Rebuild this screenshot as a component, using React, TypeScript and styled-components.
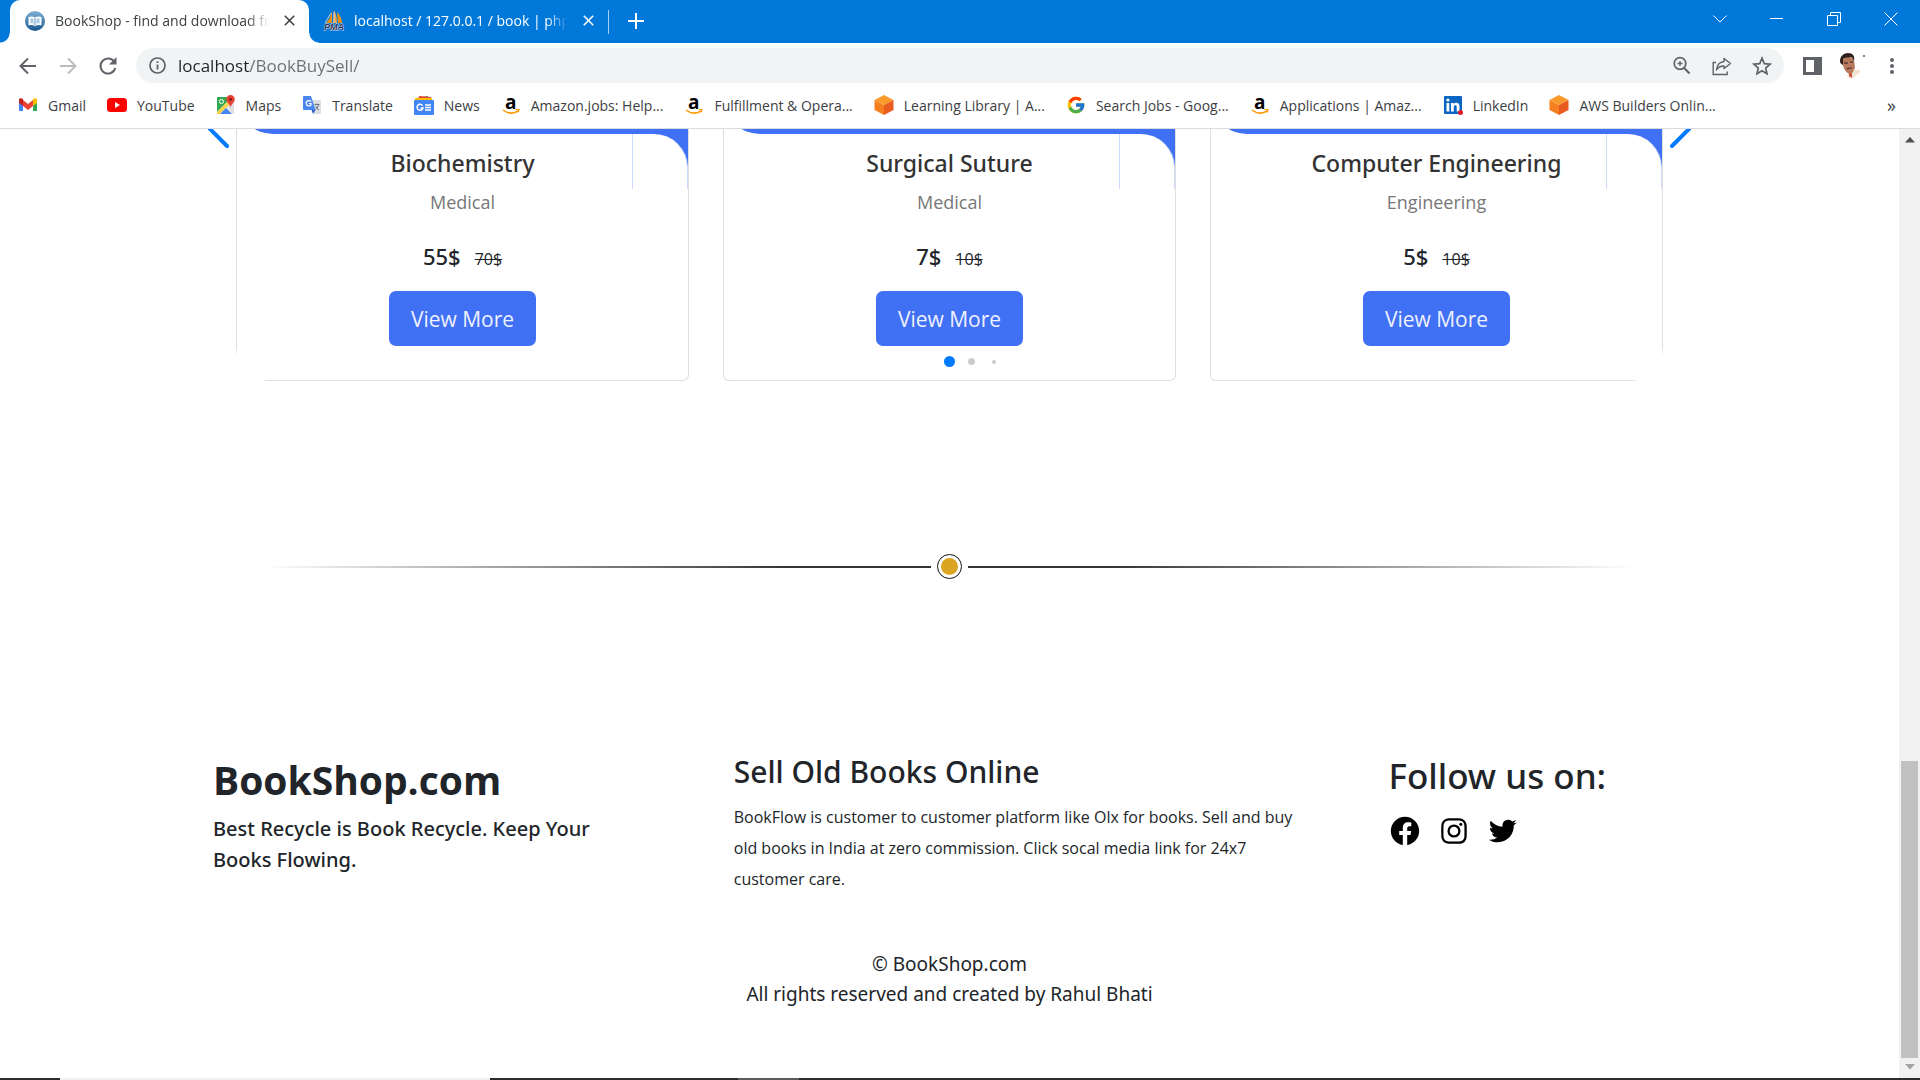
import React from "react";
import styled, { createGlobalStyle } from "styled-components";
import { BiLogoFacebookCircle, BiLogoInstagram, BiLogoTwitter } from "react-icons/bi";
import { FcGoogle } from "react-icons/fc";

const sans = `"Open Sans", "Noto Sans", sans-serif`;
const heading = `"Noto Sans", "Open Sans", sans-serif`;

const GlobalStyle = createGlobalStyle`
  *, *::before, *::after { box-sizing: border-box; }
  body { margin: 0; background: #fff; color: #212529; font-family: ${sans}; }
  h1, h2, h3, p { margin: 0; }
  a { color: inherit; text-decoration: none; }
  button { border: 0; padding: 0; background: none; font: inherit; color: inherit; cursor: pointer; }
  svg { display: block; flex: none; overflow: visible; }
`;

const Screen = styled.div`
  display: flex;
  flex-direction: column;
  height: 100vh;
  overflow: hidden;
`;

/* ---------- browser frame ---------- */

const TitleBar = styled.header`
  display: flex;
  flex: none;
  height: 43px;
  padding: 0 1px 0 10px;
  background: #0078d9;
`;

const Tab = styled.div<{ $active?: boolean }>`
  position: relative;
  display: flex;
  align-items: center;
  width: 299px;
  padding: 0 10px 2px 15px;
  gap: 10px;
  font-size: 14px;
  color: ${(p) => (p.$active ? "#3c4043" : "#fff")};
  background: ${(p) => (p.$active ? "#fff" : "transparent")};
  border-radius: 10px 10px 0 0;

  &::before,
  &::after {
    content: "";
    display: ${(p) => (p.$active ? "block" : "none")};
    position: absolute;
    bottom: 0;
    width: 10px;
    height: 10px;
  }
  &::before {
    left: -10px;
    background: radial-gradient(circle at 0 0, transparent 9px, #fff 10px);
  }
  &::after {
    right: -10px;
    background: radial-gradient(circle at 100% 0, transparent 9px, #fff 10px);
  }
`;

const TabTitle = styled.span`
  flex: 1;
  overflow: hidden;
  white-space: nowrap;
  mask-image: linear-gradient(90deg, #000 90%, transparent 100%);
`;

const TabClose = styled.button`
  display: grid;
  place-items: center;
  width: 20px;
  height: 20px;
`;

const NewTab = styled.button`
  display: grid;
  place-items: center;
  width: 54px;
  padding-bottom: 2px;
`;

const TabDivider = styled.span`
  align-self: center;
  width: 1px;
  height: 24px;
  background: #a9d0f2;
`;

const WindowControls = styled.div`
  display: flex;
  height: 37px;
  margin-left: auto;
`;

const WindowButton = styled.button`
  display: grid;
  place-items: center;
  width: 57px;
`;

const Toolbar = styled.div`
  display: flex;
  flex: none;
  align-items: center;
  height: 45px;
  padding: 0 8px;
`;

const ToolButton = styled.button`
  display: grid;
  place-items: center;
  width: 40px;
  height: 35px;
`;

const Omnibox = styled.label`
  display: flex;
  flex: 1;
  align-items: center;
  height: 35px;
  margin: 0 8px;
  padding: 0 2px 0 13px;
  border-radius: 18px;
  background: #f1f3f4;
`;

const Address = styled.input`
  flex: 1;
  min-width: 0;
  margin-left: 12px;
  padding: 0;
  border: 0;
  outline: 0;
  font: 17px/24px ${sans};
  color: #202124;
  background: linear-gradient(90deg, #202124 72px, #6a6e73 72px);
  background-clip: text;
  -webkit-text-fill-color: transparent;
`;

const BookmarkBar = styled.nav`
  display: flex;
  flex: none;
  align-items: center;
  gap: 21px;
  height: 41px;
  padding: 0 24px 6px 18px;
  border-bottom: 1px solid #dadcde;
  font-size: 14px;
  color: #3c4043;
`;

const Bookmark = styled.a`
  display: flex;
  align-items: center;
  gap: 10px;
  white-space: nowrap;
`;

const MoreBookmarks = styled.button`
  margin-left: auto;
  font-size: 18px;
  line-height: 20px;
`;

const Viewport = styled.div`
  display: flex;
  flex: 1;
  min-height: 0;
`;

const Page = styled.main`
  flex: 1;
  min-width: 0;
  overflow: hidden;
`;

const ScrollTrack = styled.div`
  display: flex;
  flex-direction: column;
  align-items: center;
  width: 21px;
  padding: 8px 0;
  background: #f1f1f1;
`;

const ScrollThumb = styled.div`
  width: 17px;
  height: 297px;
  margin: auto 0 6px;
  background: #c1c1c1;
`;

const Taskbar = styled.div`
  display: flex;
  flex: none;
  height: 2px;
  padding-left: 60px;
  background: #2d2b2c;
`;

const TaskItem = styled.span<{ $tone: string; $width: number }>`
  width: ${(p) => p.$width}px;
  background: ${(p) => p.$tone};
`;

/* ---------- slider ---------- */

const Slider = styled.section`
  display: flex;
  justify-content: center;
`;

const Slides = styled.div`
  position: relative;
  display: flex;
  flex: 0 1 1427px;
  gap: 34px;
  overflow: hidden;
  border-radius: 0 0 34px 34px;
`;

const ArrowButton = styled.button`
  width: 28px;
  height: 20px;
  overflow: hidden;
`;

const Card = styled.article`
  display: flex;
  flex: 1;
  flex-direction: column;
  align-items: center;
  padding-bottom: 34px;
  border: 1px solid #dfdfdf;
  border-top: 0;
  border-radius: 0 0 6px 6px;
`;

const Cover = styled.div`
  position: relative;
  align-self: stretch;
  height: 60px;
  margin-top: -55px;
  background: #4070f4;
  border-radius: 0 0 0 36px;

  &::before,
  &::after {
    content: "";
    position: absolute;
    top: 100%;
    right: 0;
    width: 56px;
  }
  &::before {
    height: 34px;
    background: #4070f4;
  }
  &::after {
    height: 55px;
    background: #fff;
    border: 1px solid #cfdafc;
    border-width: 0 1px;
    border-radius: 0 34px 0 0;
  }
`;

const BookTitle = styled.h3`
  margin-top: 14px;
  font: 500 23px/30px ${heading};
  color: #333;
`;

const Category = styled.p`
  margin-top: 10px;
  font-size: 18px;
  line-height: 28px;
  color: #777;
`;

const Price = styled.p`
  display: flex;
  align-items: baseline;
  gap: 14px;
  margin-top: 24px;
  font: 500 22px/32px ${heading};
`;

const OldPrice = styled.s`
  font: 400 16px/20px ${sans};
`;

const ViewButton = styled.button`
  height: 55px;
  margin-top: 19px;
  padding: 0 22px;
  border-radius: 7px;
  background: #4070f4;
  color: #eef2fe;
  font-size: 21px;
`;

const Bullets = styled.div`
  position: absolute;
  left: 0;
  right: 0;
  bottom: 14px;
  display: flex;
  justify-content: center;
  align-items: center;
  gap: 11px;
  padding-left: 44px;
`;

const BulletSlot = styled.button`
  display: grid;
  place-items: center;
  width: 11px;
  height: 11px;
`;

const Bullet = styled.span<{ $size: number; $on?: boolean }>`
  width: ${(p) => p.$size}px;
  height: ${(p) => p.$size}px;
  border-radius: 50%;
  background: ${(p) => (p.$on ? "#007aff" : "#ccc")};
`;

/* ---------- divider ---------- */

const Divider = styled.div`
  display: flex;
  align-items: center;
  justify-content: center;
  gap: 6px;
  max-width: 1427px;
  margin: 173px auto 0;
`;

const Rule = styled.span<{ $to: string }>`
  flex: 1;
  height: 2px;
  background: linear-gradient(to ${(p) => p.$to}, transparent 4%, #333 80%);
`;

const Knob = styled.span`
  width: 25px;
  height: 25px;
  padding: 3px;
  border: 1px solid #111;
  border-radius: 50%;
  background: #daa520 content-box;
`;

/* ---------- footer ---------- */

const Footer = styled.footer`
  max-width: 1473px;
  margin: 176px auto 0;
`;

const FooterColumns = styled.div`
  display: grid;
  grid-template-columns: 35fr 44fr 20fr;
`;

const Brand = styled.h1`
  font: 700 39px/50px ${sans};
`;

const Tagline = styled.p`
  max-width: 400px;
  margin-top: 8px;
  font: 500 20px/31px ${heading};
`;

const AboutTitle = styled.h2`
  font: 500 30px/34px ${heading};
`;

const About = styled.p`
  max-width: 580px;
  margin-top: 13px;
  font-size: 16px;
  line-height: 31px;
`;

const FollowTitle = styled.h2`
  font: 500 35px/42px ${heading};
`;

const Socials = styled.div`
  display: flex;
  gap: 15px;
  margin-top: 17px;
  font-size: 34px;
  color: #000;
`;

const Copyright = styled.p`
  margin-top: 54px;
  font: 400 19px/30px ${heading};
  text-align: center;
`;

/* ---------- icons ---------- */

const Cross = ({ size, width = 1 }: { size: number; width?: number }) => (
  <svg width={size} height={size} viewBox="0 0 14 14" stroke="currentColor" strokeWidth={width} fill="none">
    <path d="M1 1l12 12M13 1L1 13" />
  </svg>
);

const BookFavicon = () => (
  <svg width="20" height="20" viewBox="0 0 20 20">
    <defs>
      <linearGradient id="fav" x1="0" y1="0" x2="0" y2="1">
        <stop offset="0" stopColor="#7fb0d6" />
        <stop offset="1" stopColor="#17558f" />
      </linearGradient>
    </defs>
    <circle cx="10" cy="10" r="10" fill="url(#fav)" />
    <path d="M3.500 6c2.500-1 4.700-.8 6.500.6C11.800 5.200 14 5 16.500 6v8.500c-2.500-.8-4.700-.6-6.500.7-1.800-1.300-4-1.500-6.500-.7z" fill="#fff" />
    <path d="M10 7v7.500" stroke="#5b92c2" fill="none" />
    <path d="M5.500 7.500c1.200-.3 2.200-.1 3 .4v4.800c-.8-.4-1.800-.5-3-.2zM14.500 7.500c-1.200-.3-2.200-.1-3 .4v4.800c.8-.4 1.800-.5 3-.2z" fill="#a9c9e2" />
  </svg>
);

const PmaFavicon = () => (
  <svg width="20" height="21" viewBox="0 0 20 21">
    <path d="M8 1v12H2C5 10 7 6 8 1z" fill="#f29111" />
    <path d="M10 0c2 4 3 8 3 13H9z" fill="#f9a63a" />
    <path d="M13 2c3 3 5 7 5 11h-4z" fill="#f29111" />
    <path d="M7 3L1 13M10 2v11" stroke="#c8cbe0" strokeWidth="1" />
    <text x="0" y="20" fontSize="9" fontWeight="700" fontStyle="italic" fill="#2f3558" stroke="#d9dcef" strokeWidth="1" paintOrder="stroke" fontFamily="Liberation Sans">PMA</text>
  </svg>
);

const GmailIcon = () => (
  <svg width="20" height="20" viewBox="0 0 20 20">
    <path d="M1 5v11h4V9z" fill="#4285f4" />
    <path d="M19 5v11h-4V9z" fill="#34a853" />
    <path d="M5 5v6l5 4 5-4V5l-5 4z" fill="#ea4335" />
    <path d="M1 5c0-2 2-2.500 4-1v7L1 8z" fill="#c5221f" />
    <path d="M19 5c0-2-2-2.500-4-1v7l4-3z" fill="#fbbc04" />
  </svg>
);

const YoutubeIcon = () => (
  <svg width="20" height="20" viewBox="0 0 20 20">
    <rect y="3" width="20" height="14" rx="3.500" fill="#f00" />
    <path d="M8 7l5 3-5 3z" fill="#fff" />
  </svg>
);

const MapsIcon = () => (
  <svg width="20" height="20" viewBox="0 0 20 20">
    <rect x="1" y="2" width="17" height="17" rx="1" fill="#eee" />
    <path d="M1 2h15L1 17z" fill="#34a853" />
    <path d="M1 17L16 2l2 3L4 19H1z" fill="#fbd44b" />
    <path d="M10 13l6 6H4z" fill="#4285f4" />
    <path d="M11 12l7-6v13h-1z" fill="#dfe1e5" />
    <path d="M14.500 0a4.300 4.300 0 0 1 4.300 4.300c0 3-3.300 4.200-4.300 8.200-1-4-4.300-5.200-4.300-8.200A4.300 4.300 0 0 1 14.500 0z" fill="#ea4335" />
    <circle cx="14.500" cy="4.300" r="1.500" fill="#801b13" />
    <circle cx="5.500" cy="6.500" r="2" fill="none" stroke="#fff" />
  </svg>
);

const TranslateIcon = () => (
  <svg width="20" height="20" viewBox="0 0 20 20">
    <path d="M8 5h10a1 1 0 0 1 1 1v12a1 1 0 0 1-1 1h-6z" fill="#dcdee1" />
    <path d="M2 1h7l4.500 14H2a1 1 0 0 1-1-1V2a1 1 0 0 1 1-1z" fill="#4a86ee" />
    <path d="M9.500 15h4L11 19z" fill="#2f5fc4" />
    <path d="M9 6.500A2.700 2.700 0 1 0 9 10V8.500H6.800" fill="none" stroke="#fff" strokeWidth="1.200" />
    <path d="M12.500 9.500h5M15 8.500v1M16.500 9.500c-.5 2.500-1.500 4-3 5M13.500 11c.8 1.800 2 3 3.500 4" stroke="#6d7780" fill="none" />
  </svg>
);

const NewsIcon = () => (
  <svg width="20" height="20" viewBox="0 0 20 20">
    <path d="M2 3l12-2 1 5H3z" fill="#34a853" />
    <path d="M5 1l12 1v4H5z" fill="#ea4335" />
    <path d="M1 3h17v6H1z" fill="#fbbc04" />
    <rect y="5" width="20" height="15" rx="1" fill="#4285f4" />
    <path d="M8.500 10.500A3 3 0 1 0 9 13H6.500M11 10h6M11 12.500h6M11 15h6" fill="none" stroke="#fff" strokeWidth="1.500" />
  </svg>
);

const AmazonIcon = () => (
  <svg width="20" height="20" viewBox="0 0 20 20">
    <text x="4" y="14" fontSize="19" fontWeight="700" fontFamily="Open Sans" fill="#000">a</text>
    <path d="M2 15c5 4 11 4 15 .8" fill="none" stroke="#f90" strokeWidth="1.600" />
    <path d="M14.500 14.500h3.500l-1 3" fill="none" stroke="#f90" strokeWidth="1.200" />
  </svg>
);

const CubeIcon = () => (
  <svg width="20" height="20" viewBox="0 0 20 20">
    <path d="M10 0l9.500 5L10 10 .5 5z" fill="#fb9a2c" />
    <path d="M.5 5L10 10v10L.5 15z" fill="#f58020" />
    <path d="M19.500 5L10 10v10l9.500-5z" fill="#ea5b20" />
  </svg>
);

const LinkedInIcon = () => (
  <svg width="20" height="20" viewBox="0 0 20 20">
    <rect x="1" y="1" width="18" height="18" rx="1" fill="#0a66c2" />
    <path d="M3.500 8h2.800v8.500H3.500zM8 8h2.700v1.200c1.300-2.200 5.800-2 5.800 2v5.300h-2.800v-4.700c0-2.200-2.900-2-2.900 0v4.700H8z" fill="#fff" />
    <circle cx="4.900" cy="5" r="1.600" fill="#fff" />
    <circle cx="17.500" cy="17.500" r="2.500" fill="#e01a2b" />
  </svg>
);

const AvatarPhoto = () => (
  <svg width="28" height="28" viewBox="0 0 28 28">
    <path d="M9 24c3-5 9-7 12-6 2 1 1 3-1 4-2 0-2 3-5 4-3 1-5 0-6-2z" fill="#f4e3d0" />
    <path d="M4 8c3-4 10-4 12 0l1 7c-1 4-3 7-5 7-4-1-7-5-8-14z" fill="#b9795c" />
    <path d="M2 9c0-5 4-8 8-8 5 0 7 3 6 8-1-2-1-3-3-4-3 1-6 0-8 2l0 6c-2-1-3-2-3-4z" fill="#30201d" />
    <path d="M6 11h4M12 10h3" stroke="#5c3e36" strokeWidth="1.500" />
    <path d="M9 17c1-1 3-1 5-1" stroke="#4b3029" strokeWidth="1.200" fill="none" />
    <path d="M11 21h3v5l-3-2z" fill="#c9543f" />
    <circle cx="26" cy="4" r="1" fill="#555" />
  </svg>
);

const bookmarks: [string, () => React.ReactElement][] = [
  ["Gmail", GmailIcon],
  ["YouTube", YoutubeIcon],
  ["Maps", MapsIcon],
  ["Translate", TranslateIcon],
  ["News", NewsIcon],
  ["Amazon.jobs: Help...", AmazonIcon],
  ["Fulfillment & Opera...", AmazonIcon],
  ["Learning Library | A...", CubeIcon],
  ["Search Jobs - Goog...", () => <FcGoogle size={20} />],
  ["Applications | Amaz...", AmazonIcon],
  ["LinkedIn", LinkedInIcon],
  ["AWS Builders Onlin...", CubeIcon],
];

const books = [
  { title: "Biochemistry", category: "Medical", price: "55$", old: "70$" },
  { title: "Surgical Suture", category: "Medical", price: "7$", old: "10$" },
  { title: "Computer Engineering", category: "Engineering", price: "5$", old: "10$" },
];

const BrowserFrame = () => (
  <>
    <TitleBar>
      <Tab $active>
        <BookFavicon />
        <TabTitle>BookShop - find and download free books</TabTitle>
        <TabClose aria-label="Close tab">
          <Cross size={11} width={2} />
        </TabClose>
      </Tab>
      <Tab>
        <PmaFavicon />
        <TabTitle>localhost / 127.0.0.1 / book | phpMyAdmin</TabTitle>
        <TabClose aria-label="Close tab">
          <Cross size={11} width={2} />
        </TabClose>
      </Tab>
      <TabDivider />
      <NewTab aria-label="New tab">
        <svg width="16" height="16" viewBox="0 0 16 16" stroke="#fff" strokeWidth="2">
          <path d="M8 0v16M0 8h16" />
        </svg>
      </NewTab>
      <WindowControls>
        <WindowButton aria-label="Search tabs">
          <svg width="14" height="8" viewBox="0 0 14 8" stroke="#fff" fill="none">
            <path d="M.5.5L7 7 13.500.5" />
          </svg>
        </WindowButton>
        <WindowButton aria-label="Minimize">
          <svg width="13" height="1">
            <rect width="13" height="1" fill="#fff" />
          </svg>
        </WindowButton>
        <WindowButton aria-label="Restore">
          <svg width="14" height="14" viewBox="0 0 14 14" stroke="#fff" fill="none">
            <path d="M.5 3.500h10v10H.5zM3.500 3.500v-3h10v10h-3" />
          </svg>
        </WindowButton>
        <WindowButton aria-label="Close">
          <svg width="14" height="14" viewBox="0 0 14 14" stroke="#fff" fill="none">
            <path d="M.5.5l13 13M13.500.5l-13 13" />
          </svg>
        </WindowButton>
      </WindowControls>
    </TitleBar>

    <Toolbar>
      <ToolButton aria-label="Back">
        <svg width="18" height="18" viewBox="0 0 18 18" stroke="#5f6368" strokeWidth="2" fill="none">
          <path d="M17 9H2M9 1.500L1.500 9 9 16.500" />
        </svg>
      </ToolButton>
      <ToolButton aria-label="Forward">
        <svg width="18" height="18" viewBox="0 0 18 18" stroke="#babcbe" strokeWidth="2" fill="none">
          <path d="M1 9h15M9 1.500L16.500 9 9 16.500" />
        </svg>
      </ToolButton>
      <ToolButton aria-label="Reload">
        <svg width="18" height="18" viewBox="0 0 18 18" fill="none">
          <path d="M15.500 5.200A7.500 7.500 0 1 0 16.300 11" stroke="#5f6368" strokeWidth="2" />
          <path d="M17.500 0v7.500H10z" fill="#5f6368" />
        </svg>
      </ToolButton>
      <Omnibox>
        <svg width="17" height="17" viewBox="0 0 17 17" fill="none" stroke="#5f6368">
          <circle cx="8.500" cy="8.500" r="7.500" strokeWidth="1.700" />
          <path d="M8.500 7.500v5M8.500 4.300v1.800" strokeWidth="1.800" />
        </svg>
        <Address aria-label="Address" defaultValue="localhost/BookBuySell/" />
        <ToolButton aria-label="Zoom">
          <svg width="18" height="20" viewBox="0 0 18 20" fill="none" stroke="#5f6368">
            <circle cx="7" cy="7.500" r="5.800" strokeWidth="1.700" />
            <path d="M11.200 12l5.300 5.500" strokeWidth="2" />
            <path d="M7 5v5M4.500 7.500h5" strokeWidth="1.300" />
          </svg>
        </ToolButton>
        <ToolButton aria-label="Share">
          <svg width="20" height="20" viewBox="0 0 20 20" fill="none" stroke="#5f6368" strokeWidth="1.400">
            <path d="M4 6.500H1.200v12h14v-3" />
            <path d="M12 2.500l6.500 5-6.500 5V10c-4 0-6 1.200-7.500 4C5 9 7.500 6 12 5.500z" strokeLinejoin="round" />
          </svg>
        </ToolButton>
        <ToolButton aria-label="Bookmark this page">
          <svg width="20" height="20" viewBox="0 0 20 20" fill="none" stroke="#5f6368" strokeWidth="1.700">
            <path d="M10 2.200l2.300 5.400 5.800.5-4.400 3.900 1.300 5.700-5-3-5 3L6.300 12 1.900 8.100l5.800-.5z" />
          </svg>
        </ToolButton>
      </Omnibox>
      <ToolButton aria-label="Side panel">
        <svg width="19" height="18" viewBox="0 0 19 18">
          <path d="M0 0h19v18H0zM3 3v12h8V3z" fill="#5f6368" fillRule="evenodd" />
        </svg>
      </ToolButton>
      <ToolButton aria-label="Profile">
        <AvatarPhoto />
      </ToolButton>
      <ToolButton aria-label="Menu">
        <svg width="4" height="18" viewBox="0 0 4 18" fill="#5f6368">
          <circle cx="2" cy="3" r="2" />
          <circle cx="2" cy="9" r="2" />
          <circle cx="2" cy="15" r="2" />
        </svg>
      </ToolButton>
    </Toolbar>

    <BookmarkBar aria-label="Bookmarks">
      {bookmarks.map(([label, Icon]) => (
        <Bookmark key={label} href="#">
          <Icon />
          {label}
        </Bookmark>
      ))}
      <MoreBookmarks aria-label="More bookmarks">»</MoreBookmarks>
    </BookmarkBar>
  </>
);

const BookCard = ({ title, category, price, old }: (typeof books)[number]) => (
  <Card>
    <Cover />
    <BookTitle>{title}</BookTitle>
    <Category>{category}</Category>
    <Price>
      {price} <OldPrice>{old}</OldPrice>
    </Price>
    <ViewButton>View More</ViewButton>
  </Card>
);

export default function App() {
  return (
    <Screen>
      <GlobalStyle />
      <BrowserFrame />
      <Viewport>
        <Page>
          <Slider>
            <ArrowButton aria-label="Previous">
              <svg width="28" height="20" viewBox="0 0 28 20" stroke="#007aff" strokeWidth="4" strokeLinecap="round">
                <path d="M-1-3L19 17" />
              </svg>
            </ArrowButton>
            <Slides>
              {books.map((book) => (
                <BookCard key={book.title} {...book} />
              ))}
              <Bullets>
                <BulletSlot aria-label="Slide 1">
                  <Bullet $size={11} $on />
                </BulletSlot>
                <BulletSlot aria-label="Slide 2">
                  <Bullet $size={7} />
                </BulletSlot>
                <BulletSlot aria-label="Slide 3">
                  <Bullet $size={4} />
                </BulletSlot>
              </Bullets>
            </Slides>
            <ArrowButton aria-label="Next">
              <svg width="28" height="20" viewBox="0 0 28 20" stroke="#007aff" strokeWidth="4" strokeLinecap="round">
                <path d="M29-3L9 17" />
              </svg>
            </ArrowButton>
          </Slider>

          <Divider>
            <Rule $to="right" />
            <Knob />
            <Rule $to="left" />
          </Divider>

          <Footer>
            <FooterColumns>
              <div>
                <Brand>BookShop.com</Brand>
                <Tagline>Best Recycle is Book Recycle. Keep Your Books Flowing.</Tagline>
              </div>
              <div>
                <AboutTitle>Sell Old Books Online</AboutTitle>
                <About>
                  BookFlow is customer to customer platform like Olx for books. Sell and buy old books in India at
                  zero commission. Click socal media link for 24x7 customer care.
                </About>
              </div>
              <div>
                <FollowTitle>Follow us on:</FollowTitle>
                <Socials>
                  <a href="#" aria-label="Facebook">
                    <BiLogoFacebookCircle />
                  </a>
                  <a href="#" aria-label="Instagram">
                    <BiLogoInstagram />
                  </a>
                  <a href="#" aria-label="Twitter">
                    <BiLogoTwitter />
                  </a>
                </Socials>
              </div>
            </FooterColumns>
            <Copyright>
              © BookShop.com
              <br />
              All rights reserved and created by Rahul Bhati
            </Copyright>
          </Footer>
        </Page>
        <ScrollTrack>
          <svg width="10" height="6" viewBox="0 0 10 6">
            <path d="M5 0l5 5.500H0z" fill="#505050" />
          </svg>
          <ScrollThumb />
          <svg width="10" height="6" viewBox="0 0 10 6">
            <path d="M5 5.500L10 0H0z" fill="#a3a3a3" />
          </svg>
        </ScrollTrack>
      </Viewport>
      <Taskbar>
        <TaskItem $tone="#efefef" $width={430} />
        <TaskItem $tone="transparent" $width={248} />
        <TaskItem $tone="#5c5a5b" $width={61} />
      </Taskbar>
    </Screen>
  );
}
